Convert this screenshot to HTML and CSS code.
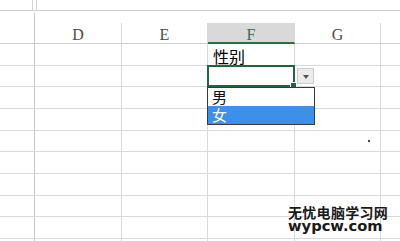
FILE: index.html
```html
<!DOCTYPE html>
<html>
<head>
<meta charset="utf-8">
<title>Sheet</title>
<link rel="stylesheet" href="styles.css">
</head>
<body>
<div class="app">
  <div class="topbar">
    <div class="namebox"></div>
    <div class="fxbox"></div>
  </div>
  <div class="sheet">
    <div class="row head">
      <div class="corner"></div>
      <div class="ch">D</div>
      <div class="ch">E</div>
      <div class="ch active">F</div>
      <div class="ch">G</div>
      <div class="ch rest"></div>
    </div>
    <div class="row">
      <div class="rh"></div><div class="c"></div><div class="c"></div>
      <div class="c label">性别</div><div class="c"></div><div class="c rest"></div>
    </div>
    <div class="row">
      <div class="rh"></div><div class="c"></div><div class="c"></div>
      <div class="c sel">
        <div class="selbox"><span class="handle"></span></div>
        <div class="ddbtn"><span class="tri"></span></div>
        <div class="ddlist">
          <div class="item">男</div>
          <div class="item on">女</div>
        </div>
      </div>
      <div class="c"></div><div class="c rest"></div>
    </div>
    <div class="row"><div class="rh"></div><div class="c"></div><div class="c"></div><div class="c"></div><div class="c"></div><div class="c rest"></div></div>
    <div class="row"><div class="rh"></div><div class="c"></div><div class="c"></div><div class="c"></div><div class="c"></div><div class="c rest"></div></div>
    <div class="row"><div class="rh"></div><div class="c"></div><div class="c"></div><div class="c"></div><div class="c"></div><div class="c rest"></div></div>
    <div class="row"><div class="rh"></div><div class="c"></div><div class="c"></div><div class="c"></div><div class="c"></div><div class="c rest"></div></div>
    <div class="row"><div class="rh"></div><div class="c"></div><div class="c"></div><div class="c"></div><div class="c"></div><div class="c rest"></div></div>
    <div class="row"><div class="rh"></div><div class="c"></div><div class="c"></div><div class="c"></div><div class="c"></div><div class="c rest"></div></div>
    <div class="row"><div class="rh"></div><div class="c"></div><div class="c"></div><div class="c"></div><div class="c"></div><div class="c rest"></div></div>
    <div class="row"><div class="rh"></div><div class="c"></div><div class="c"></div><div class="c"></div><div class="c"></div><div class="c rest"></div></div>
  </div>
  <span class="speck"></span>
  <div class="watermark">
    <div class="wm-cn">无忧电脑学习网</div>
    <div class="wm-en">wypcw.com</div>
  </div>
</div>
</body>
</html>
```

FILE: styles.css
```css
html, body {
  margin: 0;
  padding: 0;
  background: #fff;
}
.app {
  position: relative;
  width: 400px;
  height: 241px;
  overflow: hidden;
  background: #fff;
  font-family: "Noto Sans CJK SC", "Noto Sans", sans-serif;
}
.topbar {
  display: flex;
  height: 10px;
  border-bottom: 1px solid #cfcfcf;
}
.namebox {
  width: 32px;
  border-right: 1px solid #d2d2d2;
}
.fxbox {
  flex: 1;
  margin-left: 3px;
  border-left: 1px solid #d2d2d2;
}
.sheet {
  display: flex;
  flex-direction: column;
}
.row {
  display: grid;
  grid-template-columns: 35px 87px 86px 87px 86px 1fr;
  box-sizing: border-box;
  height: 21.667px;
  border-bottom: 1px solid #dadada;
}
.row.head {
  height: 33px;
  border-bottom: 1px solid #cdcdcd;
}
.corner {
  margin-top: 2px;
  border-right: 1px solid #c8c8c8;
}
.ch {
  align-self: end;
  box-sizing: border-box;
  height: 20px;
  border-right: 1px solid #dadada;
  font-family: "Liberation Serif", "DejaVu Serif", serif;
  font-size: 16px;
  line-height: 20px;
  padding-top: 2px;
  color: #4a4a4a;
  text-align: center;
}
.ch.active {
  height: 21px;
  margin-bottom: -1px;
  background: #d9d9d9;
  border-bottom: 2px solid #2a6e47;
  color: #3d6b50;
}
.ch.rest, .c.rest {
  border-right: none;
}
.rh {
  border-right: 1px solid #c8c8c8;
}
.c {
  position: relative;
  border-right: 1px solid #dadada;
}
.label {
  font-size: 16px;
  line-height: 18px;
  padding: 3px 0 0 5px;
  color: #000;
}
.selbox {
  position: absolute;
  left: -1px;
  top: -1px;
  width: 88px;
  height: 22px;
  box-sizing: border-box;
  border: 2px solid #22643f;
}
.handle {
  position: absolute;
  right: -4px;
  bottom: -4px;
  width: 5px;
  height: 5px;
  background: #22643f;
  border: 1px solid #fff;
}
.ddbtn {
  position: absolute;
  left: 89px;
  top: 2px;
  width: 17px;
  height: 16px;
  box-sizing: border-box;
  background: #ececec;
  border: 1px solid #cdcdcd;
  display: flex;
  align-items: center;
  justify-content: center;
  z-index: 2;
}
.tri {
  width: 0;
  height: 0;
  border-left: 3.5px solid transparent;
  border-right: 3.5px solid transparent;
  border-top: 4px solid #555;
  margin-top: 2px;
}
.ddlist {
  position: absolute;
  left: -1px;
  top: 21px;
  width: 108px;
  height: 38px;
  box-sizing: border-box;
  background: #fff;
  border: 1px solid #3a3a3a;
  z-index: 3;
}
.item {
  height: 18px;
  line-height: 18px;
  font-size: 15px;
  padding-left: 4px;
  color: #111;
}
.item.on {
  background: #3d8fe8;
  color: #fff;
}
.speck {
  position: absolute;
  left: 368px;
  top: 140px;
  width: 2px;
  height: 2px;
  background: #444;
}
.watermark {
  position: absolute;
  left: 288px;
  top: 205px;
  color: #1a1a1a;
  font-weight: bold;
}
.wm-cn {
  font-family: "Noto Sans CJK SC", sans-serif;
  font-size: 14px;
  line-height: 14px;
  letter-spacing: 0.3px;
}
.wm-en {
  font-family: "DejaVu Sans", "Liberation Sans", sans-serif;
  font-size: 14.7px;
  line-height: 13px;
}
```
